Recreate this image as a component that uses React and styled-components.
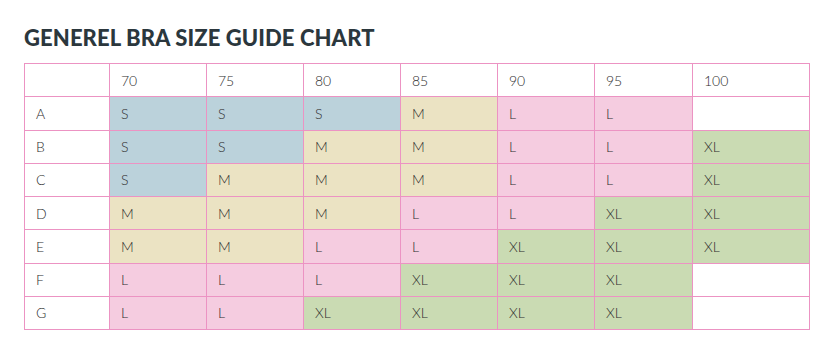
import React from 'react';
import styled, { createGlobalStyle } from 'styled-components';

const GlobalStyle = createGlobalStyle`
  body {
    margin: 0;
    background: #fff;
    font-family: Lato, "Noto Sans", sans-serif;
  }
`;

const palette = {
  S: '#bbd2db',
  M: '#ebe3c3',
  L: '#f5cce0',
  XL: '#cadbb3',
};

const cups = ['70', '75', '80', '85', '90', '95', '100'];
const colWidths = [85, 97, 97, 97, 97, 97, 98, 117];

const rows = [
  ['A', ['S', 'S', 'S', 'M', 'L', 'L', '']],
  ['B', ['S', 'S', 'M', 'M', 'L', 'L', 'XL']],
  ['C', ['S', 'M', 'M', 'M', 'L', 'L', 'XL']],
  ['D', ['M', 'M', 'M', 'L', 'L', 'XL', 'XL']],
  ['E', ['M', 'M', 'L', 'L', 'XL', 'XL', 'XL']],
  ['F', ['L', 'L', 'L', 'XL', 'XL', 'XL', '']],
  ['G', ['L', 'L', 'XL', 'XL', 'XL', 'XL', '']],
];

const Page = styled.div`
  padding: 24px 24px 0 24px;
`;

const Title = styled.h2`
  margin: 0 0 12px 0;
  font-family: Lato, sans-serif;
  font-weight: 900;
  font-size: 22px;
  line-height: 27px;
  color: #2b373d;
  letter-spacing: 0.1px;
`;

const Table = styled.table`
  border-collapse: collapse;
  table-layout: fixed;
  width: 786px;
`;

const Cell = styled.td`
  border: 1px solid #ec93c3;
  height: 32.25px;
  padding: 0 0 0 11px;
  font-size: 14px;
  font-weight: 300;
  color: #2e2e2e;
  background: ${(p) => (p.$size ? palette[p.$size] : '#fff')};
`;

export default function App() {
  return (
    <>
      <GlobalStyle />
      <Page>
        <Title>GENEREL BRA SIZE GUIDE CHART</Title>
        <Table>
          <colgroup>
            {colWidths.map((w, i) => (
              <col key={i} style={{ width: w }} />
            ))}
          </colgroup>
          <tbody>
            <tr>
              <Cell />
              {cups.map((c) => (
                <Cell key={c}>{c}</Cell>
              ))}
            </tr>
            {rows.map(([band, sizes]) => (
              <tr key={band}>
                <Cell>{band}</Cell>
                {sizes.map((s, i) => (
                  <Cell key={i} $size={s}>{s}</Cell>
                ))}
              </tr>
            ))}
          </tbody>
        </Table>
      </Page>
    </>
  );
}
